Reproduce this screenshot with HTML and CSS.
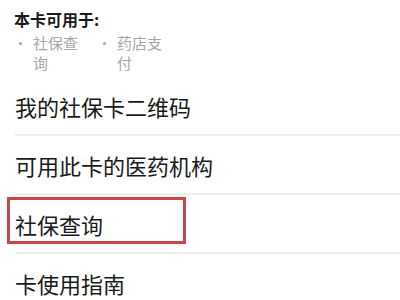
FILE: index.html
```html
<!DOCTYPE html>
<html lang="zh-CN">
<head>
<meta charset="utf-8">
<title>社保卡</title>
<link rel="stylesheet" href="styles.css">
</head>
<body>
<div class="page">
  <section class="uses">
    <h3 class="uses-title">本卡可用于:</h3>
    <ul class="uses-list">
      <li class="uses-item">社保查询</li>
      <li class="uses-item">药店支付</li>
    </ul>
  </section>
  <ul class="menu">
    <li class="menu-item">我的社保卡二维码</li>
    <li class="menu-item">可用此卡的医药机构</li>
    <li class="menu-item menu-item--marked">社保查询<span class="mark"></span></li>
    <li class="menu-item">卡使用指南</li>
  </ul>
</div>
</body>
</html>
```

FILE: styles.css
```css
html, body {
  margin: 0;
  padding: 0;
  background: #ffffff;
}

.page {
  width: 400px;
  height: 300px;
  overflow: hidden;
  font-family: "Noto Sans CJK SC", "Noto Sans", sans-serif;
  color: #1c1c1c;
}

.uses {
  padding: 9px 0 4px 14px;
}

.uses-title {
  margin: 0;
  font-size: 16px;
  line-height: 20px;
  font-weight: 700;
  color: #1a1a1a;
}

.uses-list {
  display: flex;
  gap: 17px;
  margin: 4px 0 0;
  padding: 0;
  list-style: none;
}

.uses-item {
  position: relative;
  width: 48px;
  padding-left: 19px;
  font-size: 15px;
  line-height: 20px;
  color: #a6a6a6;
}

.uses-item::before {
  content: "";
  position: absolute;
  left: 5px;
  top: 9px;
  width: 3px;
  height: 3px;
  border-radius: 50%;
  background: #a6a6a6;
}

.menu {
  margin: 0;
  padding: 0;
  list-style: none;
}

.menu-item {
  position: relative;
  display: flex;
  align-items: center;
  height: 57px;
  margin-left: 15px;
  border-bottom: 2px solid #eeeeee;
  font-size: 22px;
  color: #1a1a1a;
}

.mark {
  position: absolute;
  left: -8px;
  top: 2px;
  width: 173px;
  height: 41px;
  border: 3px solid #c8454b;
}
```
